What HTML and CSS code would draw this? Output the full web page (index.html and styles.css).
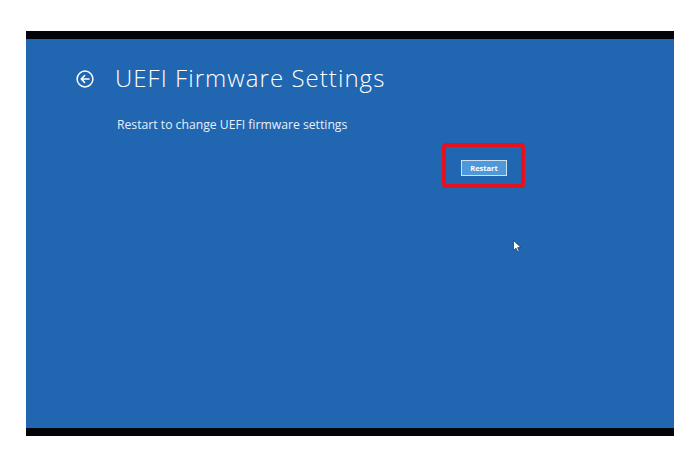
FILE: index.html
```html
<!DOCTYPE html>
<html lang="en">
<head>
<meta charset="utf-8">
<title>UEFI Firmware Settings</title>
<link rel="stylesheet" href="styles.css">
</head>
<body>
<div class="screen">
  <div class="content">
    <div class="title-row">
      <svg class="back" width="18" height="18" viewBox="0 0 18 18" aria-hidden="true">
        <circle cx="9" cy="9" r="7.9" fill="none" stroke="#ffffff" stroke-width="1.5"/>
        <path d="M13 9 H5.2 M8.6 5.6 L5.2 9 L8.6 12.4" fill="none" stroke="#ffffff" stroke-width="1.5" stroke-linecap="round" stroke-linejoin="round"/>
      </svg>
      <h1 class="title">UEFI Firmware Settings</h1>
    </div>
    <p class="subtitle">Restart to change UEFI firmware settings</p>
    <div class="highlight">
      <button class="restart" type="button">Restart</button>
    </div>
  </div>
  <svg class="cursor" width="9" height="13" viewBox="0 0 9 13" aria-hidden="true">
    <path d="M0.5 0.5 L0.5 10.5 L3 8.2 L4.8 12 L6.3 11.3 L4.6 7.6 L8 7.6 Z" fill="#ffffff" stroke="#1a3f70" stroke-width="0.8" stroke-linejoin="round"/>
  </svg>
</div>
</body>
</html>
```
FILE: styles.css
```css
html, body {
  margin: 0;
  padding: 0;
  background: #ffffff;
}
body {
  width: 700px;
  height: 467px;
  overflow: hidden;
  padding-top: 31px;
  box-sizing: border-box;
}
.screen {
  position: relative;
  margin-left: 26px;
  width: 648px;
  height: 389px;
  background: #2166b0;
  border-top: 8px solid #03030a;
  border-bottom: 8px solid #03030a;
}
.content {
  padding-top: 24px;
  font-family: "Open Sans", "Liberation Sans", sans-serif;
  color: #ffffff;
}
.title-row {
  display: flex;
  align-items: center;
  height: 30px;
  padding-left: 50px;
}
.back {
  display: block;
  margin-top: 2px;
}
.title {
  margin: 0 0 0 21px;
  font-size: 24px;
  font-weight: 300;
  line-height: 30px;
  letter-spacing: 1.05px;
}
.subtitle {
  margin: 23px 0 0 91px;
  font-size: 12.2px;
  line-height: 18px;
  font-weight: 400;
  color: #e8f0f8;
}
.highlight {
  margin: 9px 0 0 416px;
  width: 60px;
  height: 24px;
  border: 4px solid #e8101c;
  border-radius: 4px;
  padding: 13px 0 0 15px;
  box-sizing: content-box;
}
.restart {
  display: block;
  width: 46px;
  height: 16px;
  margin: 0;
  padding: 0;
  background: #4f98d9;
  border: 1px solid #cfe3f5;
  color: #ffffff;
  font-family: "Open Sans", "Liberation Sans", sans-serif;
  font-size: 7.5px;
  font-weight: 700;
  line-height: 14px;
}
.cursor {
  position: absolute;
  left: 487px;
  top: 201px;
}
```
